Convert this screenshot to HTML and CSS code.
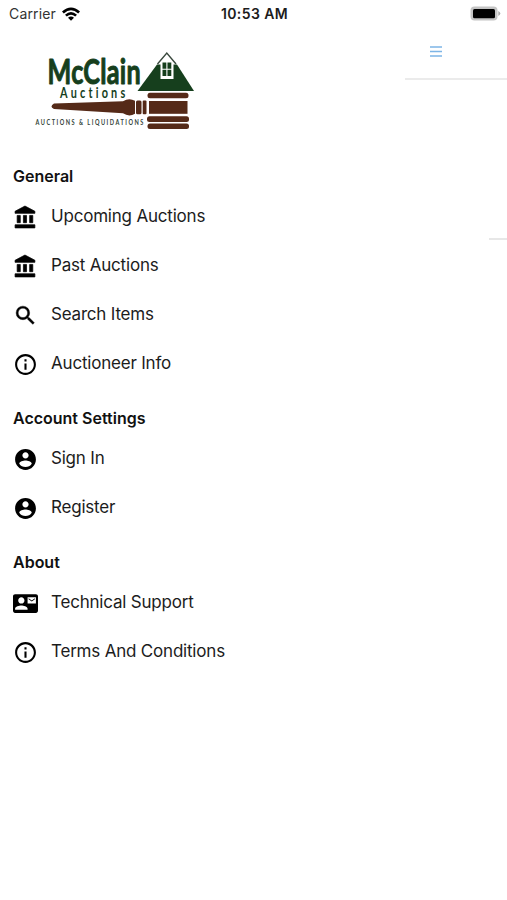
FILE: index.html
```
<!DOCTYPE html>
<html lang="en">
<head>
<meta charset="utf-8">
<title>McClain Auctions</title>
<link rel="stylesheet" href="styles.css">
</head>
<body>
<svg class="defs" width="0" height="0" aria-hidden="true">
  <symbol id="bank" viewBox="0 0 24 24"><path stroke="#000" stroke-width=".7" stroke-linejoin="round" d="M4 10v7h3v-7H4zm6 0v7h3v-7h-3zM2 22h19v-3H2v3zm14-12v7h3v-7h-3zm-4.500-9L2 6v2h19V6l-9.500-5z"/></symbol>
  <symbol id="search" viewBox="0 0 24 24"><path stroke="#000" stroke-width=".4" d="M15.500 14h-.79l-.28-.27A6.471 6.471 0 0 0 16 9.500 6.500 6.500 0 1 0 9.500 16c1.610 0 3.090-.59 4.230-1.570l.27.28v.79l5 4.990L20.490 19l-4.990-5zm-6 0C7.010 14 5 11.990 5 9.500S7.010 5 9.500 5 14 7.010 14 9.500 11.990 14 9.500 14z"/></symbol>
  <symbol id="info" viewBox="0 0 24 24"><path d="M11 17h2v-6h-2v6zm1-15C6.480 2 2 6.480 2 12s4.480 10 10 10 10-4.480 10-10S17.520 2 12 2zm0 18c-4.410 0-8-3.590-8-8s3.590-8 8-8 8 3.590 8 8-3.590 8-8 8zM11 9h2V7h-2v2z"/></symbol>
  <symbol id="account" viewBox="0 0 24 24"><path d="M12 2C6.480 2 2 6.480 2 12s4.480 10 10 10 10-4.480 10-10S17.520 2 12 2zm0 3c1.660 0 3 1.340 3 3s-1.340 3-3 3-3-1.340-3-3 1.340-3 3-3zm0 14.200c-2.500 0-4.710-1.280-6-3.220.03-1.990 4-3.080 6-3.080 1.990 0 5.970 1.090 6 3.080-1.290 1.940-3.500 3.220-6 3.220z"/></symbol>
  <symbol id="contact" viewBox="0 0 24 24"><path d="M21 8V7l-3 2-3-2v1l3 2 3-2zm1-5H2C.9 3 0 3.900 0 5v14c0 1.100.9 2 2 2h20c1.100 0 1.990-.9 1.990-2L24 5c0-1.100-.9-2-2-2zM8 6c1.660 0 3 1.340 3 3s-1.340 3-3 3-3-1.340-3-3 1.340-3 3-3zm6 12H2v-1c0-2 4-3.100 6-3.100s6 1.100 6 3.100v1zm8-6h-8V6h8v6z"/></symbol>
</svg>

<header class="status">
  <div class="carrier"><span>Carrier</span>
    <svg class="wifi" viewBox="0 0 18 14"><path d="M0 4.600Q9-3.600 18 4.600L16.200 6.500Q9 0 1.800 6.500ZM3 7.700Q9 2.500 15 7.700L13.200 9.500Q9 6 4.800 9.500ZM6 10.700Q9 8.300 12 10.700L9 13.700Z"/></svg>
  </div>
  <time class="clock">10:53 AM</time>
  <svg class="battery" viewBox="0 0 31 16"><rect x=".5" y=".5" width="27" height="14" rx="4" fill="#c4c4c4"/><rect x="3" y="3" width="22" height="9.200" rx="1.500"/><path d="M28.300 5q4 2.500 0 5z" fill="#aaa"/></svg>
</header>

<div class="screen">
  <aside class="drawer">
    <svg class="logo" viewBox="20 40 190 100" role="img" aria-label="McClain Auctions">
      <g class="logo-green">
        <text class="logo-name" transform="translate(47.500 83.500) scale(.74 1)" textLength="126" lengthAdjust="spacing">McClain</text>
        <text class="logo-sub" transform="translate(60 98.300) scale(.75 1)" textLength="87" lengthAdjust="spacing">Auctions</text>
        <path d="M157 64.500h20l17 26.500h-56.500z"/>
      </g>
      <path d="M160.500 79V62.500L166.700 54l6.800 8.500V79z" fill="#fff"/>
      <path d="M157.500 64L166.800 53l9.200 11" fill="none" stroke="#39483d" stroke-width="1.400"/>
      <path class="logo-green" d="M162.500 62.500h8.800v13.500h-8.800z"/>
      <path d="M166.900 62v14M162 69.200h10" stroke="#fff" stroke-width="1.100"/>
      <g class="logo-brown">
        <rect x="147.500" y="92.700" width="41" height="5.600" rx="2.500"/>
        <rect x="149" y="101" width="38.500" height="12.800"/>
        <rect x="147" y="116.300" width="42" height="5.600" rx="2.500"/>
        <rect x="147.500" y="123.400" width="41.500" height="5.700" rx="2.500"/>
        <path d="M54 103.500L123 101.300q6-4 12-.5v13q-6 3.500-12-.5L54 109q-5-2.500 0-5.500z"/>
        <rect x="136" y="100.500" width="5.500" height="13.800" rx="1.500"/>
        <rect x="142.700" y="100.500" width="3.800" height="13.800" rx="1"/>
      </g>
      <text class="logo-tag" transform="translate(35.500 125.200) scale(.7 1)" textLength="154" lengthAdjust="spacing">AUCTIONS &amp; LIQUIDATIONS</text>
    </svg>

    <nav class="menu">
      <section>
        <h2>General</h2>
        <a class="item"><svg><use href="#bank"/></svg><span>Upcoming Auctions</span></a>
        <a class="item"><svg><use href="#bank"/></svg><span>Past Auctions</span></a>
        <a class="item"><svg><use href="#search"/></svg><span>Search Items</span></a>
        <a class="item"><svg><use href="#info"/></svg><span>Auctioneer Info</span></a>
      </section>
      <section>
        <h2>Account Settings</h2>
        <a class="item"><svg><use href="#account"/></svg><span>Sign In</span></a>
        <a class="item"><svg><use href="#account"/></svg><span>Register</span></a>
      </section>
      <section>
        <h2>About</h2>
        <a class="item"><svg><use href="#contact"/></svg><span>Technical Support</span></a>
        <a class="item"><svg><use href="#info"/></svg><span>Terms And Conditions</span></a>
      </section>
    </nav>
  </aside>
  <main class="page">
    <div class="toolbar"><svg class="burger" viewBox="0 0 12 11"><path d="M0 1h12M0 5.500h12M0 10h12"/></svg></div>
    <div class="divider"></div>
  </main>
</div>
</body>
</html>
```
FILE: styles.css
```
* { box-sizing: border-box; }
body {
  margin: 0;
  height: 900px;
  overflow: hidden;
  background: #fff;
  color: #1c1c1c;
  font-family: Inter, "Liberation Sans", sans-serif;
}
.defs { position: absolute; }
.status {
  display: grid;
  grid-template-columns: 1fr auto 1fr;
  align-items: center;
  height: 27px;
  padding: 0 6px 0 8px;
  font-size: 14px;
}
.carrier { display: flex; align-items: center; gap: 6px; padding-left: 1px; color: #333; letter-spacing: .15px; }
.wifi { width: 18px; height: 14px; fill: #000; }
.clock { font-weight: 600; letter-spacing: .4px; }
.battery { width: 31px; height: 16px; justify-self: end; }
.screen { display: flex; height: 873px; }
.drawer { width: 405px; padding-top: 13px; }
.logo { display: block; width: 190px; height: 100px; margin-left: 20px; }
.logo-green { fill: #163f1d; }
.logo-brown { fill: #552a18; }
.logo text { font-family: Lato, sans-serif; font-weight: 700; font-variant-ligatures: none; }
.logo .logo-name { font-size: 34px; stroke: #163f1d; stroke-width: 1; stroke-linejoin: round; }
.logo .logo-sub { font-size: 14.5px; }
.logo .logo-tag { font-size: 8px; fill: #35443a; }
.menu { display: flex; flex-direction: column; gap: 16px; padding: 21px 0 0 13px; }
.menu h2 {
  margin: 0;
  height: 30px;
  line-height: 30px;
  font-size: 16px;
  font-weight: 600;
  color: #111;
}
.item { display: flex; align-items: center; gap: 13px; height: 49px; font-size: 17px; letter-spacing: -.2px; }
.item svg { width: 25px; height: 25px; fill: #000; margin-top: 3px; }
.page { flex: 1; }
.toolbar { height: 53px; border-bottom: 2px solid #ebebeb; padding: 19px 0 0 25px; }
.burger { display: block; width: 12px; height: 11px; fill: none; stroke: #7db5e6; stroke-width: 1.3; }
.divider { width: 18px; height: 2px; margin: 158px 0 0 auto; background: #e7e7e7; }
```
